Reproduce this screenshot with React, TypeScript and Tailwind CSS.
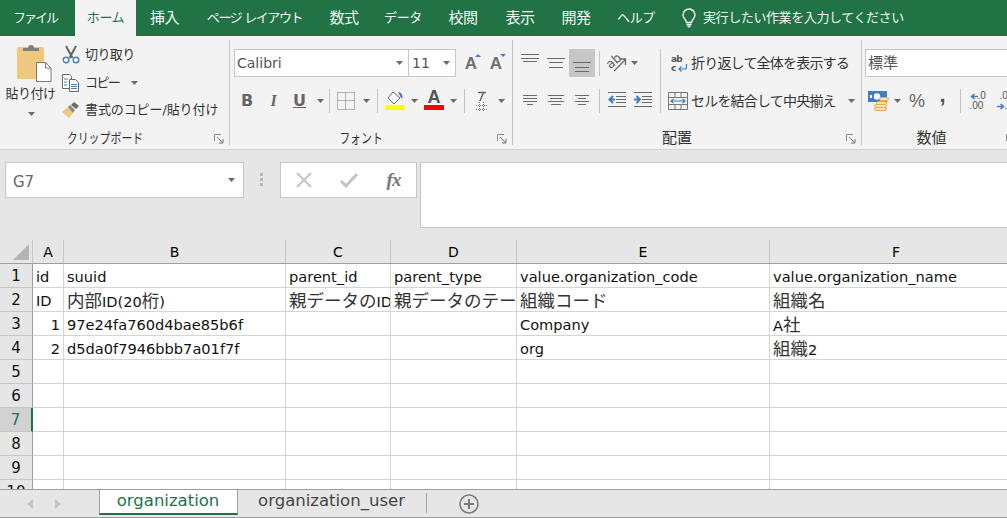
import type { ReactNode } from "react";

const FONT = "[font-family:'DejaVu_Sans','Noto_Sans_CJK_JP',sans-serif]";

const TABS = [
  { label: "ファイル", w: "w-[75px] pr-[5px] tracking-[-2px]" },
  { label: "ホーム", w: "w-[61px]", active: true },
  { label: "挿入", w: "w-[57px] text-[15px]" },
  { label: "ページ レイアウト", w: "w-[123px] tracking-[-1.4px]" },
  { label: "数式", w: "w-[56px] text-[15px]" },
  { label: "データ", w: "w-[62px]" },
  { label: "校閲", w: "w-[58px] text-[15px]" },
  { label: "表示", w: "w-[56px] text-[15px]" },
  { label: "開発", w: "w-[56px] text-[15px]" },
  { label: "ヘルプ", w: "w-[64px]" },
];

const COLS = [
  { name: "A", w: "w-[31px]" },
  { name: "B", w: "w-[222px]" },
  { name: "C", w: "w-[105px]" },
  { name: "D", w: "w-[126px]" },
  { name: "E", w: "w-[253px]" },
  { name: "F", w: "w-[253px]" },
];

const ROWS: { id?: string; right?: boolean; cells: string[] }[] = [
  { id: "id", cells: ["suuid", "parent_id", "parent_type", "value.organization_code", "value.organization_name"] },
  { id: "ID", cells: ["内部ID(20桁)", "親データのID", "親データのテーブル", "組織コード", "組織名"] },
  { id: "1", right: true, cells: ["97e24fa760d4bae85b6f", "", "", "Company", "A社"] },
  { id: "2", right: true, cells: ["d5da0f7946bbb7a01f7f", "", "", "org", "組織2"] },
  { cells: ["", "", "", "", ""] },
  { cells: ["", "", "", "", ""] },
  { cells: ["", "", "", "", ""] },
  { cells: ["", "", "", "", ""] },
  { cells: ["", "", "", "", ""] },
  { cells: ["", "", "", "", ""] },
];

// japanese runs are rendered bigger than latin in the sheet
function CellText({ text }: { text: string }) {
  const parts = text.split(/([\u3000-\u9fff]+)/);
  return (
    <>
      {parts.map((p, i) => (i % 2 === 1 ? <span key={i} className="text-[17.5px] text-[#333]">{p}</span> : p))}
    </>
  );
}

function Caret({ className = "" }: { className?: string }) {
  return (
    <svg width="7" height="4" viewBox="0 0 7 4" className={`shrink-0 ${className}`}>
      <path d="M0 0h7L3.5 4z" fill="#6a6a6a" />
    </svg>
  );
}

function Launcher() {
  return (
    <svg width="10" height="10" viewBox="0 0 10 10" className="absolute right-[5px] bottom-[1px]">
      <path d="M.5 7V.5H7" fill="none" stroke="#8a8a8a" />
      <path d="M3 3l5 5M5 9h4V5" fill="none" stroke="#6a6a6a" />
    </svg>
  );
}

function Group({ w, label, scale, children }: { w: string; label: string; scale?: boolean; children: ReactNode }) {
  return (
    <div className={`relative flex flex-col shrink-0 ${w} h-[105px] border-r border-[#c6c6c6]`}>
      <div className="flex-1 min-h-0">{children}</div>
      <div className="h-[21px] pt-[4px] pr-[20px] text-center leading-[21px] text-[#333] whitespace-nowrap">
        {scale ? (
          <span className="inline-block text-[14px] scale-x-[0.78]">{label}</span>
        ) : (
          <span className="text-[15px]">{label}</span>
        )}
      </div>
      <Launcher />
    </div>
  );
}

function Sep({ h = "h-[24px]" }: { h?: string }) {
  return <div className={`w-px shrink-0 ${h} bg-[#c6c6c6]`} />;
}

function Slot({ w, children }: { w: string; children?: ReactNode }) {
  return <div className={`${w} shrink-0 flex items-center justify-center`}>{children}</div>;
}

function Lines({ w, rows }: { w: number; rows: [number, number][] }) {
  return (
    <svg width={w} height="24" viewBox={`0 0 ${w} 24`}>
      {rows.map(([y, inset], i) => (
        <rect key={i} x={inset} y={y} width={w - inset * 2} height="1" fill="#6a6a6a" />
      ))}
    </svg>
  );
}

function PasteIcon() {
  return (
    <svg width="35" height="38" viewBox="0 0 35 38">
      <rect x="0" y="3" width="27" height="32" rx="2" fill="#efc77e" />
      <path d="M6 7V4h5a3 3 0 0 1 6 0h5v3z" fill="#7f7f7f" />
      <path d="M19.500 18.500h9l5.500 5.500v13.500h-14.500z" fill="#fff" stroke="#7a7a7a" />
      <path d="M28.500 18.500v5.500h5.500" fill="none" stroke="#7a7a7a" />
    </svg>
  );
}

function Scissors() {
  return (
    <svg width="18" height="19" viewBox="0 0 18 19">
      <path d="M4 1l6.500 12M14 1L7.500 13" stroke="#666" strokeWidth="2" fill="none" />
      <circle cx="4" cy="15" r="2.800" fill="none" stroke="#4a7fb8" strokeWidth="1.400" />
      <circle cx="14" cy="15" r="2.800" fill="none" stroke="#4a7fb8" strokeWidth="1.400" />
    </svg>
  );
}

function CopyIcon() {
  return (
    <svg width="18" height="18" viewBox="0 0 18 18">
      <path d="M.5.500h7l2 2v12h-9z" fill="#fff" stroke="#6a6a6a" />
      <path d="M7.500 5.500h6l3 3v9h-9z" fill="#fff" stroke="#6a6a6a" />
      <path d="M2 5h4M2 8h3M2 11h3" stroke="#4a7fb8" />
      <path d="M9 10.500h6M9 12.500h6M9 14.500h6" stroke="#4a7fb8" />
    </svg>
  );
}

function Brush() {
  return (
    <svg width="18" height="16" viewBox="0 0 18 16">
      <path d="M0 10l6-5 5 6-4 5z" fill="#efc77e" />
      <path d="M6 5l2-2 5 5-2 3z" fill="#8a8a8a" />
      <path d="M9 3l3-3 5 4-3 3z" fill="#6a6a6a" />
    </svg>
  );
}

function GrowA({ up }: { up: boolean }) {
  return (
    <div className="relative w-[16px] h-[18px] flex items-end justify-center text-[17px] leading-[17px] font-bold text-[#707070] [font-family:'Liberation_Sans',sans-serif]">
      A
      <svg width="6" height="3" viewBox="0 0 6 3" className="absolute top-0 -right-[2px]">
        <path d={up ? "M0 3h6L3 0z" : "M0 0h6L3 3z"} fill="#4a7fb8" />
      </svg>
    </div>
  );
}

function BorderIcon() {
  return (
    <svg width="18" height="18" viewBox="0 0 18 18">
      <path d="M.5.500h17v17H.5zM8.500 .5v17M.5 8.500h17" fill="none" stroke="#777" strokeDasharray="1 1" />
    </svg>
  );
}

function FillIcon() {
  return (
    <svg width="20" height="20" viewBox="0 0 20 20">
      <path d="M8 2l7 6-6 6-6-6z" fill="#fff" stroke="#666" />
      <path d="M8 2V0M13 2c3 0 5 3 4.500 6-1 1-2-1-2.500-2z" fill="#3f7fc0" stroke="none" />
      <rect x="0" y="15" width="20" height="5" fill="#ffff00" />
    </svg>
  );
}

function ColorA() {
  return (
    <div className="flex flex-col items-center w-[20px]">
      <span className="text-[18px] leading-[15px] font-bold text-[#555] [font-family:'Liberation_Sans',sans-serif]">A</span>
      <div className="w-[20px] h-[5px] bg-[#ff0000]" />
    </div>
  );
}

function ClearIcon() {
  return (
    <svg width="12" height="20" viewBox="0 0 12 20">
      <path d="M2 1.500h8M7.500 1.500L4 10" stroke="#666" strokeWidth="1.500" fill="none" />
      <path d="M0 14.500h12M0 18.500h12M3.500 11v9M7.500 11v9" stroke="#777" strokeDasharray="1 1" fill="none" />
    </svg>
  );
}

function OrientIcon() {
  return (
    <svg width="21" height="20" viewBox="0 0 21 20">
      <text x="0" y="13" fontSize="13" fill="#666" transform="rotate(-40 7 9)" fontFamily="DejaVu Sans">ab</text>
      <path d="M8 18L19 7M13.500 6h6v6" fill="none" stroke="#666" strokeWidth="1.300" />
    </svg>
  );
}

function IndentIcon({ out }: { out: boolean }) {
  return (
    <svg width="18" height="24" viewBox="0 0 18 24">
      <path d="M0 3.500h18M8 7.500h10M8 10.500h10M8 13.500h10M0 17.500h18" stroke="#6a6a6a" fill="none" />
      <path d={out ? "M7 10.500H2M5 7L1.500 10.500 5 14" : "M0 10.500h5M2.500 7L6 10.500 2.500 14"} stroke="#3f7fc0" strokeWidth="2" fill="none" />
    </svg>
  );
}

function WrapIcon() {
  return (
    <svg width="17" height="18" viewBox="0 0 17 18">
      <text x="0" y="8" fontSize="9" fontWeight="700" fill="#555" fontFamily="DejaVu Sans">ab</text>
      <text x="0" y="17" fontSize="9" fontWeight="700" fill="#555" fontFamily="DejaVu Sans">c</text>
      <path d="M15.500 10v3a2 2 0 0 1-2 2H8M10.500 12.500L8 15l2.500 2.500" fill="none" stroke="#3f7fc0" strokeWidth="1.200" />
    </svg>
  );
}

function MergeIcon() {
  return (
    <svg width="20" height="18" viewBox="0 0 20 18">
      <path d="M.5.500h19v17H.5zM.5 5.500h19M.5 12.500h19M7 .5v5M13 .5v5M7 12.500v5M13 12.500v5" fill="none" stroke="#777" />
      <path d="M3 9h14M5.500 7L3 9l2.500 2M14.500 7L17 9l-2.500 2" fill="#fff" stroke="#3f7fc0" strokeWidth="1.200" />
    </svg>
  );
}

function CurrencyIcon() {
  return (
    <svg width="21" height="20" viewBox="0 0 21 20">
      <rect x="0" y="0" width="19" height="11" fill="#3f7fc0" />
      <circle cx="9" cy="5.500" r="3.200" fill="#fff" />
      <rect x="2" y="4" width="2" height="3" fill="#fff" />
      <rect x="11.500" y="6.500" width="9" height="3" rx="1.500" fill="#fbe3bd" stroke="#e9a94f" />
      <rect x="8.500" y="10.500" width="10" height="3" rx="1.500" fill="#fbe3bd" stroke="#e9a94f" />
      <rect x="6.500" y="13.500" width="12" height="3" rx="1.500" fill="#fbe3bd" stroke="#e9a94f" />
      <rect x="6.500" y="16.500" width="12" height="3" rx="1.500" fill="#fbe3bd" stroke="#e9a94f" />
    </svg>
  );
}

function DecimalIcon({ inc }: { inc: boolean }) {
  const arrow = (
    <svg width="8" height="7" viewBox="0 0 8 7">
      <path d={inc ? "M0 3.500h6M3.500 1l3 2.500-3 2.500" : "M8 3.500H2M4.500 1L1.500 3.500l3 2.500"} fill="none" stroke="#3f7fc0" strokeWidth="1.600" />
    </svg>
  );
  return (
    <div className="w-[17px] h-[20px] flex flex-col text-[10px] leading-[10px] text-[#555] [font-family:'Liberation_Sans',sans-serif] whitespace-nowrap">
      {inc ? (
        <>
          <div className="pl-[3px]">.00</div>
          <div className="flex items-center">{arrow}<span>.0</span></div>
        </>
      ) : (
        <>
          <div className="flex items-center">{arrow}<span>.0</span></div>
          <div>.00</div>
        </>
      )}
    </div>
  );
}

function Ribbon() {
  return (
    <div className="h-[114px] bg-[#f3f3f3] border-b border-[#d2d2d2] flex pt-[4px] text-[#333] text-[13px] overflow-hidden">
      <Group w="w-[230px]" label="クリップボード" scale>
        <div className="flex h-full">
          <div className="w-[62px] shrink-0 flex flex-col items-center pt-[4px] pl-[6px]">
            <PasteIcon />
            <div className="-ml-[7px] mt-[3px] leading-[18px] tracking-[-0.5px]">貼り付け</div>
            <Caret className="-ml-[5px] mt-[9px]" />
          </div>
          <div className="flex flex-col pt-[1px]">
            <div className="h-[28px] flex items-center gap-[4px]"><Scissors /><span className="ml-[1px] tracking-[-0.6px]">切り取り</span></div>
            <div className="h-[28px] flex items-center gap-[4px]"><CopyIcon /><span className="ml-[1px] tracking-[-1.6px]">コピー</span><Caret className="ml-[8px]" /></div>
            <div className="h-[28px] flex items-center gap-[4px]"><Brush /><span className="ml-[1px] tracking-[-0.1px]">書式のコピー/貼り付け</span></div>
          </div>
        </div>
      </Group>

      <Group w="w-[283px]" label="フォント" scale>
        <div className="pt-[9px] pl-[4px]">
          <div className="flex items-center h-[28px]">
            <div className="w-[175px] h-[28px] bg-white border border-[#c6c6c6] flex items-center justify-between pl-[2px] pr-[5px] text-[14px]">
              <span className="text-[#555]">Calibri</span>
              <Caret />
            </div>
            <div className="w-[48px] h-[28px] bg-white border border-[#c6c6c6] -ml-px flex items-center justify-between pl-[3px] pr-[5px] text-[14px]">
              <span className="text-[#555]">11</span>
              <Caret />
            </div>
            <div className="ml-[7px] w-[16px]"><GrowA up /></div>
            <div className="ml-[9px] w-[16px]"><GrowA up={false} /></div>
          </div>
          <div className="flex items-center h-[24px] mt-[12px]">
            <Slot w="w-[26px]"><b className="text-[16px] text-[#666]">B</b></Slot>
            <Slot w="w-[27px]"><i className="text-[16px] font-bold text-[#666] [font-family:'Liberation_Serif',serif]">I</i></Slot>
            <Slot w="w-[25px]"><b className="text-[16px] text-[#666] underline">U</b></Slot>
            <Slot w="w-[17px]"><Caret /></Slot>
            <Sep />
            <Slot w="w-[26px] pl-[6px]"><BorderIcon /></Slot>
            <Slot w="w-[21px]"><Caret /></Slot>
            <Sep />
            <Slot w="w-[28px] pl-[6px] pb-[2px]"><FillIcon /></Slot>
            <Slot w="w-[13px] pl-[3px]"><Caret /></Slot>
            <Slot w="w-[24px] pl-[6px] pb-[2px]"><ColorA /></Slot>
            <Slot w="w-[21px]"><Caret /></Slot>
            <Sep />
            <Slot w="w-[26px] pl-[8px]"><ClearIcon /></Slot>
            <Slot w="w-[20px]"><Caret /></Slot>
          </div>
        </div>
      </Group>

      <Group w="w-[349px]" label="配置">
        <div className="pt-[9px] flex">
          <div className="flex flex-col w-[147px] shrink-0">
            <div className="flex items-center h-[28px]">
              <Slot w="w-[8px]" />
              <Slot w="w-[18px]"><Lines w={18} rows={[[3, 0], [7, 0], [10, 2]]} /></Slot>
              <Slot w="w-[8px]" />
              <Slot w="w-[18px]"><Lines w={18} rows={[[7, 0], [11, 2], [16, 2]]} /></Slot>
              <Slot w="w-[4px]" />
              <div className="w-[26px] h-[28px] bg-[#c6c6c6] flex items-center justify-center shrink-0"><Lines w={18} rows={[[11, 0], [16, 2], [20, 2]]} /></div>
              <Slot w="w-[4px]" />
              <Sep h="h-[25px]" />
              <Slot w="w-[27px] pl-[6px]"><OrientIcon /></Slot>
              <Slot w="w-[14px]"><Caret /></Slot>
            </div>
            <div className="flex items-center h-[24px] mt-[12px]">
              <Slot w="w-[10px]" />
              <Slot w="w-[14px]"><Lines w={14} rows={[[6, 0], [9, 0], [12, 0], [15, 4]]} /></Slot>
              <Slot w="w-[38px]"><Lines w={16} rows={[[6, 0], [9, 2], [12, 0], [15, 3]]} /></Slot>
              <Slot w="w-[14px]"><Lines w={14} rows={[[6, 0], [9, 3], [12, 0], [15, 3]]} /></Slot>
              <Slot w="w-[10px]" />
              <Sep />
              <Slot w="w-[34px]"><IndentIcon out /></Slot>
              <Slot w="w-[18px]"><IndentIcon out={false} /></Slot>
            </div>
          </div>
          <Sep h="h-[64px]" />
          <div className="flex flex-col pl-[10px] whitespace-nowrap text-[14px] tracking-[-0.8px]">
            <div className="h-[28px] flex items-center gap-[3px]"><WrapIcon /><span>折り返して全体を表示する</span></div>
            <div className="h-[24px] mt-[12px] flex items-center -ml-[3px] gap-[3px]"><MergeIcon /><span>セルを結合して中央揃え</span><Caret className="ml-[9px]" /></div>
          </div>
        </div>
      </Group>

      <Group w="w-[160px]" label="数値">
        <div className="pt-[9px] pl-[3px]">
          <div className="h-[28px] w-[160px] bg-white border border-[#c6c6c6] pl-[2px] flex items-center text-[15px] text-[#555]">標準</div>
          <div className="flex items-center h-[24px] mt-[12px] pl-[3px]">
            <Slot w="w-[21px]"><CurrencyIcon /></Slot>
            <Slot w="w-[16px]"><Caret /></Slot>
            <Slot w="w-[24px]"><span className="text-[18px] text-[#666] [font-family:'Liberation_Sans',sans-serif]">%</span></Slot>
            <Slot w="w-[31px] pr-[4px]"><span className="text-[22px] leading-[22px] font-bold text-[#555] -mt-[12px] [font-family:'Liberation_Sans',sans-serif]">,</span></Slot>
            <Sep />
            <Slot w="w-[34px]"><DecimalIcon inc={false} /></Slot>
            <Slot w="w-[20px]"><DecimalIcon inc /></Slot>
          </div>
        </div>
      </Group>
    </div>
  );
}

function FormulaBar() {
  return (
    <div className="h-[90px] bg-[#e6e6e6] flex items-start pt-[12px] pl-[5px]">
      <div className="w-[239px] h-[36px] shrink-0 bg-white border border-[#c6c6c6] flex items-center justify-between pl-[7px] pr-[8px]">
        <span className="pt-[5px] text-[15px] text-[#666]">G7</span>
        <Caret />
      </div>
      <div className="w-[36px] h-[36px] shrink-0 flex flex-col items-center justify-center gap-[2px] pb-[2px] pr-[2px]">
        <div className="w-[3px] h-[3px] bg-[#b8b8b8]" />
        <div className="w-[3px] h-[3px] bg-[#b8b8b8]" />
        <div className="w-[3px] h-[3px] bg-[#b8b8b8]" />
      </div>
      <div className="w-[137px] h-[36px] shrink-0 bg-white border border-[#c6c6c6] flex items-center">
        <Slot w="w-[45px]">
          <svg width="16" height="16" viewBox="0 0 16 16"><path d="M1 1l14 14M15 1L1 15" stroke="#c4c4c4" strokeWidth="2" /></svg>
        </Slot>
        <Slot w="w-[45px]">
          <svg width="18" height="15" viewBox="0 0 18 15"><path d="M1 8l5 5L17 1" fill="none" stroke="#c4c4c4" strokeWidth="3" /></svg>
        </Slot>
        <Slot w="w-[45px]">
          <span className="text-[19px] font-bold italic text-[#777] tracking-[-1px] [font-family:'Liberation_Serif',serif]">fx</span>
        </Slot>
      </div>
      <div className="ml-[3px] flex-1 h-[66px] bg-white border border-[#c6c6c6] border-r-0" />
    </div>
  );
}

function Sheet() {
  return (
    <div className="flex-1 min-h-0 overflow-hidden bg-white">
      <div className="flex h-[24px] bg-[#e6e6e6] border-b border-[#9e9e9e]">
        <div className="w-[33px] shrink-0 border-r border-[#c6c6c6] flex items-start pl-[13px] pt-[4px]">
          <svg width="16" height="16" viewBox="0 0 16 16"><path d="M16 0v16H0z" fill="#b5b5b5" /></svg>
        </div>
        {COLS.map((c) => (
          <div key={c.name} className={`${c.w} shrink-0 border-r border-[#c6c6c6] text-center text-[14px] leading-[25px] text-black`}>
            {c.name}
          </div>
        ))}
      </div>
      {ROWS.map((row, i) => (
        <div key={i} className="flex h-[24px]">
          <div className={`w-[33px] shrink-0 text-center text-[15px] leading-[25px] border-b border-b-[#c6c6c6] ${i === 6 ? "bg-[#d2d2d2] text-[#217346] border-r-2 border-r-[#217346]" : "bg-[#e6e6e6] text-[#111] border-r border-r-[#9e9e9e]"}`}>
            {i + 1}
          </div>
          <div className={`w-[31px] shrink-0 overflow-hidden border-r border-b border-[#d4d4d4] px-[3px] text-[14.6px] leading-[26px] text-[#111] ${row.right ? "text-right" : ""}`}>
            {row.id}
          </div>
          {row.cells.map((cell, j) => (
            <div key={j} className={`${COLS[j + 1].w} shrink-0 overflow-hidden whitespace-nowrap border-r border-b border-[#d4d4d4] px-[3px] text-[14.6px] leading-[26px] text-[#111]`}>
              <CellText text={cell} />
            </div>
          ))}
        </div>
      ))}
    </div>
  );
}

function TabBar() {
  return (
    <div className="h-[29px] shrink-0 bg-[#e6e6e6] border-t border-b border-[#9e9e9e] flex items-start text-[16.5px]">
      <div className="w-[99px] h-[27px] shrink-0 flex items-center pl-[27px] gap-[22px]">
        <svg width="6" height="10" viewBox="0 0 6 10"><path d="M6 0v10L0 5z" fill="#c4c4c4" /></svg>
        <svg width="6" height="10" viewBox="0 0 6 10"><path d="M0 0v10l6-5z" fill="#c4c4c4" /></svg>
      </div>
      <div className="w-[139px] h-[26px] shrink-0 -mt-px bg-white border-x border-t border-[#9e9e9e] border-b-[2px] border-b-[#217346] text-center text-[#217346] leading-[22px] pr-[1px]">
        organization
      </div>
      <div className="w-[188px] shrink-0 text-center text-[#444] leading-[21px] pr-[1px]">organization_user</div>
      <div className="w-px h-[20px] mt-[3px] bg-[#9e9e9e] shrink-0" />
      <div className="ml-[32px] mt-[4px]">
        <svg width="20" height="20" viewBox="0 0 20 20">
          <circle cx="10" cy="10" r="9" fill="none" stroke="#7a7a7a" strokeWidth="1.500" />
          <path d="M10 5v10M5 10h10" stroke="#7a7a7a" strokeWidth="2" />
        </svg>
      </div>
    </div>
  );
}

export default function App() {
  return (
    <div className={`w-[1007px] h-[518px] flex flex-col overflow-hidden bg-white ${FONT}`}>
      <div className="h-[36px] shrink-0 bg-[#217346] flex text-[#f4f7f5] text-[13px] tracking-[-0.4px]">
        {TABS.map((t) => (
          <div key={t.label} className={`${t.w} shrink-0 flex items-center justify-center whitespace-nowrap ${t.active ? "bg-[#f3f3f3] text-[#217346]" : ""}`}>
            {t.label}
          </div>
        ))}
        <div className="flex items-center ml-[14px] gap-[7px] whitespace-nowrap">
          <svg width="14" height="20" viewBox="0 0 14 20">
            <path d="M4.500 14.500c0-3-3.500-4-3.500-7.500a6 6 0 0 1 12 0c0 3.500-3.500 4.500-3.500 7.500z" fill="none" stroke="#fff" strokeWidth="1.300" />
            <path d="M4.500 16.500h5M5.500 18.500h3" stroke="#fff" strokeWidth="1.300" />
          </svg>
          <span>実行したい作業を入力してください</span>
        </div>
      </div>
      <Ribbon />
      <FormulaBar />
      <Sheet />
      <TabBar />
    </div>
  );
}
